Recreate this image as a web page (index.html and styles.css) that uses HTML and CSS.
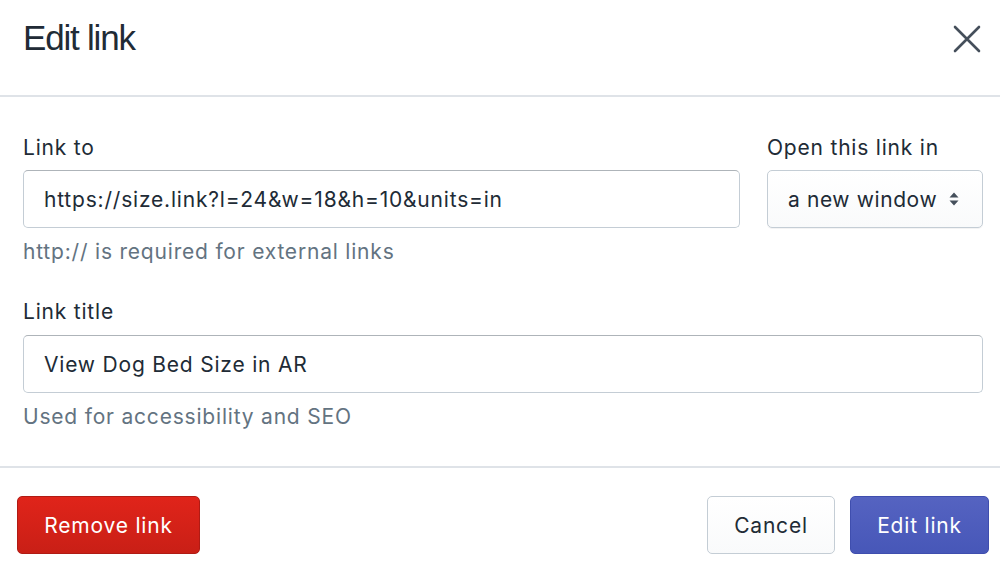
FILE: index.html
```html
<!DOCTYPE html>
<html>
<head>
<meta charset="utf-8">
<link rel="stylesheet" href="styles.css">
</head>
<body>
<div class="modal">
  <div class="header">
    <h1 class="title">Edit link</h1>
    <button class="close" aria-label="Close">
      <svg width="28" height="28" viewBox="0 0 28 28"><path d="M2 2 L26 26 M26 2 L2 26" stroke="#454f5b" stroke-width="2.6" stroke-linecap="round" fill="none"/></svg>
    </button>
  </div>
  <div class="body">
    <div class="row">
      <div class="field grow">
        <label class="label">Link to</label>
        <div class="input">https://size.link?l=24&amp;w=18&amp;h=10&amp;units=in</div>
        <div class="help">http:// is required for external links</div>
      </div>
      <div class="field">
        <label class="label">Open this link in</label>
        <div class="select">
          <span>a new window</span>
          <svg width="12" height="18" viewBox="0 0 12 18"><path d="M1.5 7.5 L6 2.5 L10.5 7.5 Z M1.5 10.5 L6 15.5 L10.5 10.5 Z" fill="#454f5b"/></svg>
        </div>
      </div>
    </div>
    <div class="field second">
      <label class="label">Link title</label>
      <div class="input">View Dog Bed Size in AR</div>
      <div class="help">Used for accessibility and SEO</div>
    </div>
  </div>
  <div class="footer">
    <button class="btn destructive">Remove link</button>
    <div class="spacer"></div>
    <button class="btn plain">Cancel</button>
    <button class="btn primary">Edit link</button>
  </div>
</div>
</body>
</html>
```
FILE: styles.css
```css
* { box-sizing: border-box; }
html, body { margin: 0; padding: 0; background: #fff; }
body {
  font-family: Inter, "Noto Sans", sans-serif;
  color: #212b36;
  width: 1000px;
  height: 570px;
  overflow: hidden;
  letter-spacing: 0.8px;
}
.header {
  height: 97px;
  padding: 18px 19px 0 23px;
  display: flex;
  align-items: flex-start;
  justify-content: space-between;
  border-bottom: 2px solid #dfe3e8;
}
.title {
  margin: 0;
  font-family: "Liberation Sans", Arial, sans-serif;
  font-weight: 400;
  font-size: 35px;
  letter-spacing: -1.2px;
  line-height: 40px;
  color: #212b36;
}
.close {
  background: none;
  border: 0;
  padding: 0;
  margin-top: 7px;
  width: 28px;
  height: 28px;
  display: flex;
}
.body {
  padding: 39px 17px 37px 23px;
  border-bottom: 2px solid #dfe3e8;
}
.row {
  display: flex;
  gap: 27px;
}
.grow { flex: 1; }
.field { display: flex; flex-direction: column; }
.second { margin-top: 36px; }
.label {
  font-size: 21px;
  line-height: 24px;
  margin-bottom: 10px;
  color: #212b36;
}
.second .label { margin-bottom: 11px; }
.input {
  height: 58px;
  border: 1.5px solid #c4cdd5;
  border-top-color: #aeb4b9;
  border-radius: 5px;
  padding: 0 20px;
  display: flex;
  align-items: center;
  font-size: 21px;
  color: #212b36;
}
.help {
  margin-top: 12px;
  font-size: 21px;
  line-height: 24px;
  color: #637381;
}
.select {
  width: 216px;
  height: 58px;
  border: 1.5px solid #c4cdd5;
  border-radius: 5px;
  padding: 0 22px 0 20px;
  display: flex;
  align-items: center;
  justify-content: space-between;
  font-size: 21px;
  background: linear-gradient(#ffffff, #f9fafb);
  box-shadow: 0 1px 0 rgba(22,29,37,0.05);
  letter-spacing: 0.6px;
}
.footer {
  display: flex;
  align-items: center;
  gap: 15px;
  padding: 28px 11px 0 17px;
}
.spacer { flex: 1; }
.btn {
  height: 58px;
  padding: 0;
  font-family: Inter, "Noto Sans", sans-serif;
  font-size: 21px;
  letter-spacing: 0.8px;
  border-radius: 5px;
  border: 1.5px solid;
}
.destructive {
  width: 183px;
  color: #fff;
  background: linear-gradient(#e0241a, #c91f16);
  border-color: #b01b14;
}
.plain {
  width: 128px;
  color: #212b36;
  background: linear-gradient(#ffffff, #f9fafb);
  border-color: #c4cdd5;
}
.primary {
  width: 139px;
  color: #fff;
  background: linear-gradient(#5563c1, #4757b8);
  border-color: #3f4eae;
}
```
